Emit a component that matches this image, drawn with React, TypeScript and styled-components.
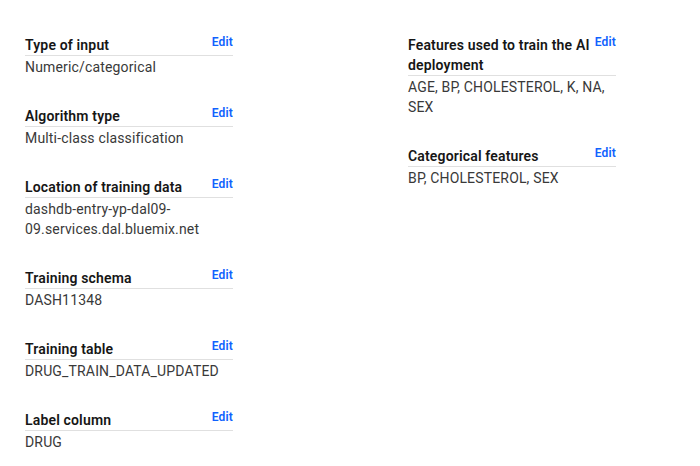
import React from "react";
import styled, { createGlobalStyle } from "styled-components";

const Global = createGlobalStyle`
  html, body { margin: 0; padding: 0; background: #ffffff; }
  body { font-family: Roboto, "Noto Sans", sans-serif; }
`;

const Page = styled.div`
  display: grid;
  grid-template-columns: 208px 208px;
  column-gap: 175px;
  align-items: start;
  padding: 35px 0 0 25px;
`;

const Column = styled.div`
  display: flex;
  flex-direction: column;
  gap: 29px;
`;

const Block = styled.section`
  display: flex;
  flex-direction: column;
`;

const Header = styled.div`
  display: flex;
  align-items: flex-start;
  justify-content: space-between;
  border-bottom: 1px solid #e0e0e0;
`;

const Title = styled.h3`
  margin: 0;
  font-size: 14px;
  line-height: 20px;
  font-weight: 600;
  letter-spacing: 0.16px;
  color: #161616;
  flex: 1;
  min-width: 0;
`;

const EditLink = styled.a`
  font-size: 12px;
  line-height: 14px;
  font-weight: 600;
  letter-spacing: 0.16px;
  color: #0f62fe;
  text-decoration: none;
  cursor: pointer;
  margin-top: 0;
  flex: none;
`;

const Value = styled.div`
  margin-top: 1px;
  font-size: 14px;
  line-height: 20px;
  font-weight: 400;
  letter-spacing: 0.16px;
  color: #393939;
  overflow-wrap: anywhere;
`;

type Item = { title: string; value: string };

const left: Item[] = [
  { title: "Type of input", value: "Numeric/categorical" },
  { title: "Algorithm type", value: "Multi-class classification" },
  { title: "Location of training data", value: "dashdb-entry-yp-dal09-09.services.dal.bluemix.net" },
  { title: "Training schema", value: "DASH11348" },
  { title: "Training table", value: "DRUG_TRAIN_DATA_UPDATED" },
  { title: "Label column", value: "DRUG" },
];

const right: Item[] = [
  { title: "Features used to train the AI deployment", value: "AGE, BP, CHOLESTEROL, K, NA, SEX" },
  { title: "Categorical features", value: "BP, CHOLESTEROL, SEX" },
];

const Detail = ({ item }: { item: Item }) => (
  <Block>
    <Header>
      <Title>{item.title}</Title>
      <EditLink>Edit</EditLink>
    </Header>
    <Value>{item.value}</Value>
  </Block>
);

export default function App() {
  return (
    <>
      <Global />
      <Page>
        <Column>
          {left.map((it) => (
            <Detail key={it.title} item={it} />
          ))}
        </Column>
        <Column>
          {right.map((it) => (
            <Detail key={it.title} item={it} />
          ))}
        </Column>
      </Page>
    </>
  );
}
